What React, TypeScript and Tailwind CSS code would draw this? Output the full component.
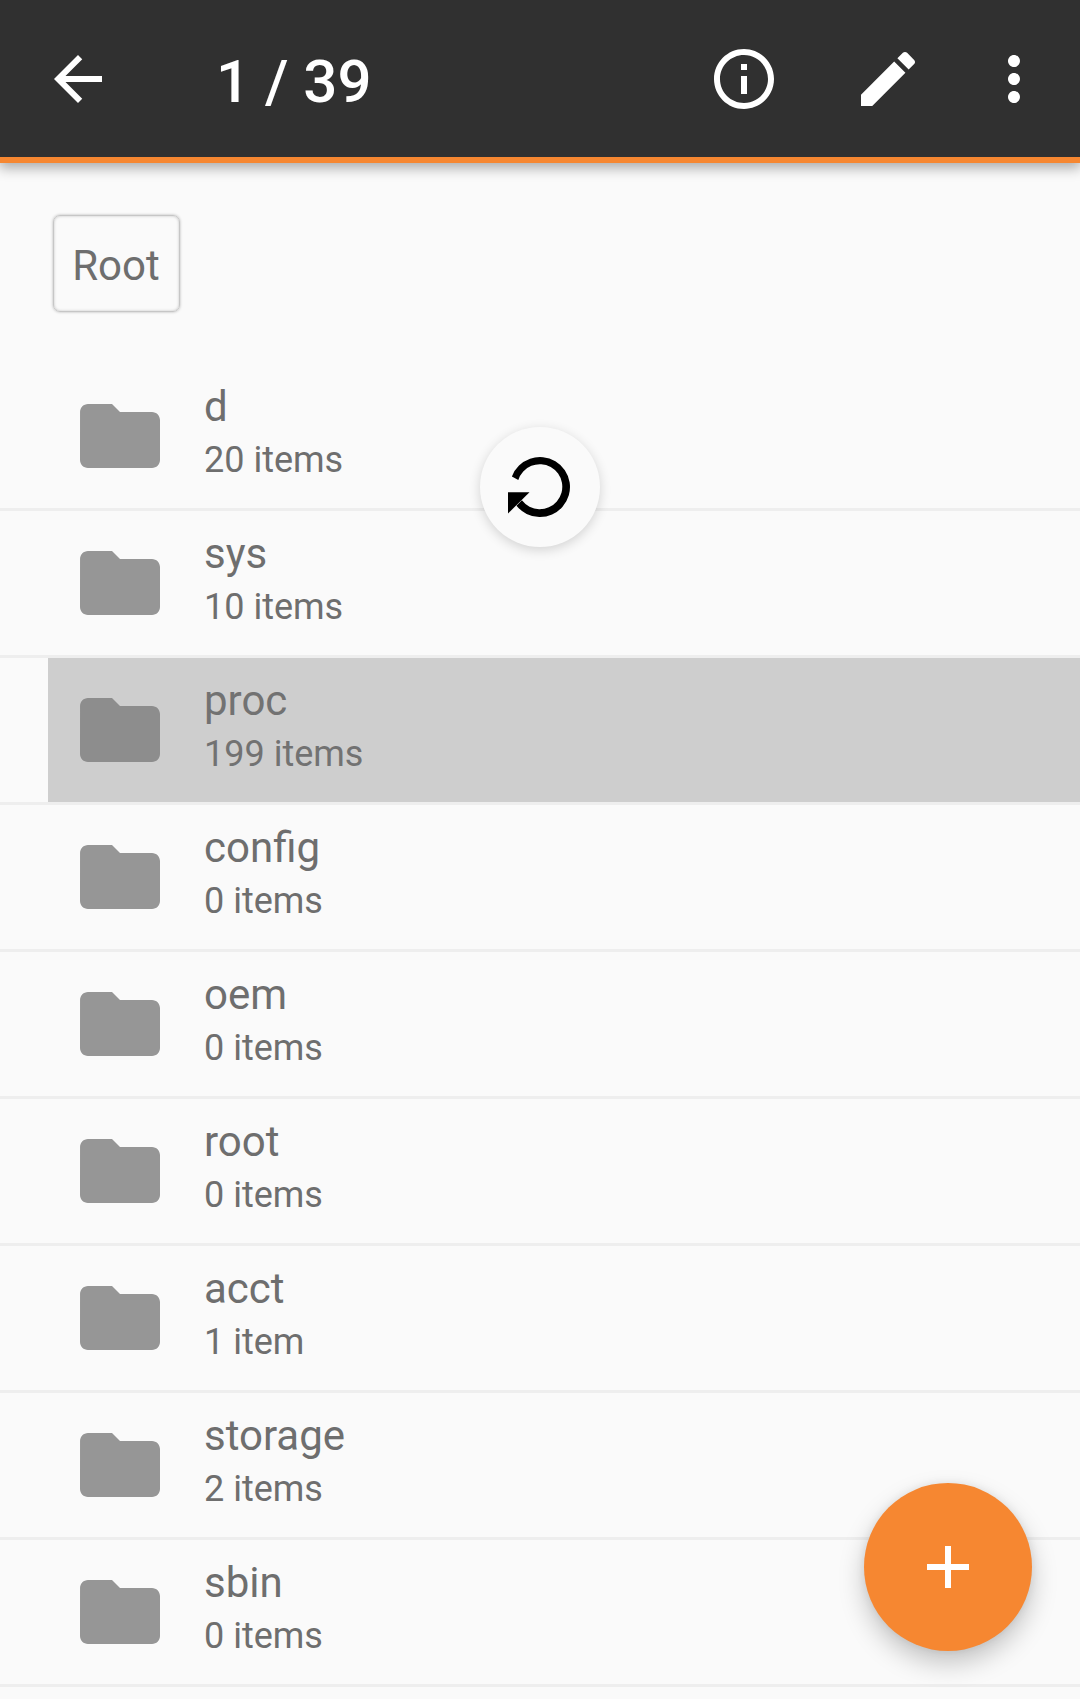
const rows = [
  { name: "d", count: "20 items" },
  { name: "sys", count: "10 items" },
  { name: "proc", count: "199 items", selected: true },
  { name: "config", count: "0 items" },
  { name: "oem", count: "0 items" },
  { name: "root", count: "0 items" },
  { name: "acct", count: "1 item" },
  { name: "storage", count: "2 items" },
  { name: "sbin", count: "0 items" },
];

function Icon({ d, className }: { d: string; className: string }) {
  return (
    <svg viewBox="0 0 24 24" fill="currentColor" className={className}>
      <path d={d} />
    </svg>
  );
}

function Header() {
  return (
    <header className="relative flex h-[163px] items-start border-b-6 border-[#f68731] bg-[#303030] pt-[43px] pr-[30px] pl-[42px] text-white shadow-[0_4px_12px_1px_rgba(0,0,0,0.32)]">
      <button className="size-[72px]" aria-label="Back">
        <Icon className="size-[72px]" d="M20 11H7.83l5.59-5.59L12 4l-8 8 8 8 1.41-1.41L7.83 13H20v-2z" />
      </button>
      <h1 className="ml-[102px] flex-1 text-[60px] leading-[78px] font-medium">1 / 39</h1>
      <button className="size-[72px]" aria-label="Info">
        <Icon
          className="size-[72px]"
          d="M11 17h2v-6h-2v6zm1-15C6.48 2 2 6.48 2 12s4.48 10 10 10 10-4.48 10-10S17.52 2 12 2zm0 18c-4.41 0-8-3.59-8-8s3.59-8 8-8 8 3.59 8 8-3.59 8-8 8zM11 9h2V7h-2v2z"
        />
      </button>
      <button className="ml-[72px] size-[72px]" aria-label="Edit">
        <Icon
          className="size-[72px]"
          d="M3 17.25V21h3.75L17.81 9.94l-3.75-3.75L3 17.25zM20.71 7.04c.39-.39.39-1.02 0-1.41l-2.34-2.34c-.39-.39-1.02-.39-1.41 0l-1.83 1.83 3.75 3.75 1.83-1.83z"
        />
      </button>
      <button className="ml-[54px] size-[72px]" aria-label="More">
        <Icon
          className="size-[72px]"
          d="M12 8c1.1 0 2-.9 2-2s-.9-2-2-2-2 .9-2 2 .9 2 2 2zm0 2c-1.1 0-2 .9-2 2s.9 2 2 2 2-.9 2-2-.9-2-2-2zm0 6c-1.1 0-2 .9-2 2s.9 2 2 2 2-.9 2-2-.9-2-2-2z"
        />
      </button>
    </header>
  );
}

export default function App() {
  return (
    <div className="relative h-[1699px] w-[1080px] overflow-hidden bg-[#fafafa] font-['Roboto',sans-serif] text-[#6e6e6e]">
      <Header />
      <nav className="flex h-[201px] items-start pt-[52px] pl-[53px]">
        <button className="h-[97px] w-[127px] rounded-[7px] border border-[#c6c6c6] pt-[5px] pr-[1px] text-[42px] leading-[56px] shadow-[0_0_3px_rgba(0,0,0,0.28),inset_0_0_3px_rgba(0,0,0,0.22)]">
          Root
        </button>
      </nav>
      <ul>
        {rows.map((row) => (
          <li key={row.name} className="h-[147px] border-b-3 border-[#eeeeee] pl-12">
            <div className={row.selected ? "flex h-full bg-[#cecece] pl-6 text-[#727272]" : "flex h-full pl-6"}>
              <Icon
                className={row.selected ? "mt-6 size-24 text-[#8d8d8d]" : "mt-6 size-24 text-[#969696]"}
                d="M10 4H4c-1.1 0-1.99.9-1.99 2L2 18c0 1.1.9 2 2 2h16c1.1 0 2-.9 2-2V8c0-1.1-.9-2-2-2h-8l-2-2z"
              />
              <div className="ml-9 pt-[15px]">
                <div className="text-[42px] leading-[56px]">{row.name}</div>
                <div className="text-[36px] leading-[50px]">{row.count}</div>
              </div>
            </div>
          </li>
        ))}
      </ul>
      <div className="absolute top-[427px] left-[480px] size-[120px] rounded-full bg-[#fafafa] shadow-[0_3px_12px_rgba(0,0,0,0.16)]">
        <svg viewBox="0 0 120 120" className="size-[120px]">
          <path d="M31.9 49.5A30 30 0 1 1 36.5 78.7L41.9 73.3A22.5 22.5 0 1 0 38.3 53Z" />
          <path d="M28 65.3H49.5L28 86.5Z" />
        </svg>
      </div>
      <button
        aria-label="Add"
        className="absolute top-[1483px] left-[864px] flex size-[168px] items-center justify-center rounded-full bg-[#f68731] text-white shadow-[0_12px_26px_rgba(0,0,0,0.22),0_0_8px_rgba(0,0,0,0.08)]"
      >
        <Icon className="size-[72px]" d="M19 13h-6v6h-2v-6H5v-2h6V5h2v6h6v2z" />
      </button>
    </div>
  );
}
